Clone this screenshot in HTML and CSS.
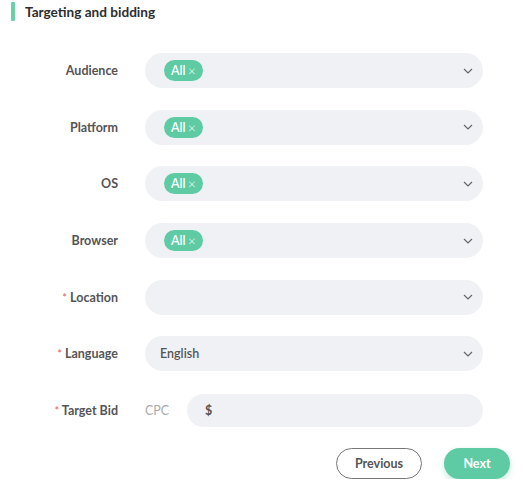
FILE: index.html
```html
<!DOCTYPE html>
<html>
<head>
<meta charset="utf-8">
<link rel="stylesheet" href="styles.css">
</head>
<body>
<div class="page">
  <div class="title"><span class="bar"></span><span>Targeting and bidding</span></div>
  <div class="form">
    <div class="row">
      <div class="label">Audience</div>
      <div class="select"><span class="tag">All <span class="x">×</span></span><svg class="chev" viewBox="0 0 10 6"><path d="M1 1l4 4 4-4" fill="none" stroke="#666" stroke-width="1.2"/></svg></div>
    </div>
    <div class="row">
      <div class="label">Platform</div>
      <div class="select"><span class="tag">All <span class="x">×</span></span><svg class="chev" viewBox="0 0 10 6"><path d="M1 1l4 4 4-4" fill="none" stroke="#666" stroke-width="1.2"/></svg></div>
    </div>
    <div class="row">
      <div class="label">OS</div>
      <div class="select"><span class="tag">All <span class="x">×</span></span><svg class="chev" viewBox="0 0 10 6"><path d="M1 1l4 4 4-4" fill="none" stroke="#666" stroke-width="1.2"/></svg></div>
    </div>
    <div class="row">
      <div class="label">Browser</div>
      <div class="select"><span class="tag">All <span class="x">×</span></span><svg class="chev" viewBox="0 0 10 6"><path d="M1 1l4 4 4-4" fill="none" stroke="#666" stroke-width="1.2"/></svg></div>
    </div>
    <div class="row">
      <div class="label"><span class="req">*</span> Location</div>
      <div class="select"><span class="fill"></span><svg class="chev" viewBox="0 0 10 6"><path d="M1 1l4 4 4-4" fill="none" stroke="#666" stroke-width="1.2"/></svg></div>
    </div>
    <div class="row">
      <div class="label"><span class="req">*</span> Language</div>
      <div class="select"><span class="value">English</span><svg class="chev" viewBox="0 0 10 6"><path d="M1 1l4 4 4-4" fill="none" stroke="#666" stroke-width="1.2"/></svg></div>
    </div>
    <div class="row">
      <div class="label"><span class="req">*</span> Target Bid</div>
      <div class="bid">
        <span class="cpc">CPC</span>
        <div class="input"><span class="dollar">$</span></div>
      </div>
    </div>
  </div>
  <div class="actions">
    <button class="btn prev">Previous</button>
    <button class="btn next">Next</button>
  </div>
</div>
</body>
</html>
```
FILE: styles.css
```css
* { box-sizing: border-box; }
body {
  margin: 0;
  background: #fff;
  font-family: Lato, "Open Sans", sans-serif;
  color: #4a4a4a;
}
.page {
  padding: 2px 13px 0 11px;
}
.title {
  display: flex;
  align-items: center;
  gap: 10px;
  height: 19px;
  font-weight: 700;
  font-size: 13.6px;
  color: #2e2e2e;
}
.bar {
  width: 4px;
  height: 19px;
  background: #68d1aa;
  border-radius: 1px;
}
.form {
  display: flex;
  flex-direction: column;
  gap: 21.7px;
  margin-top: 32px;
}
.row {
  display: flex;
  align-items: center;
  height: 35px;
}
.label {
  width: 107px;
  text-align: right;
  font-size: 12.5px;
  font-weight: 700;
  color: #555;
  margin-right: 27px;
}
.req {
  color: #e55a5a;
  font-weight: 400;
  font-size: 11px;
}
.select {
  flex: 1;
  height: 35px;
  max-width: 338px;
  background: #f0f1f4;
  border-radius: 18px;
  display: flex;
  align-items: center;
  padding: 0 10px 0 19px;
}
.tag {
  background: #5ecba5;
  color: #fff;
  border-radius: 11px;
  height: 21px;
  display: inline-flex;
  align-items: center;
  padding: 0 7px 0 7px;
  font-size: 12.5px;
  font-weight: 600;
}
.x {
  font-weight: 300;
  font-size: 14px;
  margin-left: 2px;
}
.value {
  font-size: 12.5px;
  font-weight: 600;
  color: #555;
  margin-left: -4px;
}
.fill { flex: 1; }
.chev {
  width: 10px;
  height: 6px;
  margin-left: auto;
}
.bid {
  flex: 1;
  max-width: 338px;
  display: flex;
  align-items: center;
}
.cpc {
  font-size: 12.5px;
  color: #aaa;
  width: 42px;
}
.input {
  flex: 1;
  height: 33px;
  background: #f0f1f4;
  border-radius: 17px;
  display: flex;
  align-items: center;
  padding-left: 18px;
}
.dollar {
  font-size: 12.5px;
  font-weight: 700;
  color: #555;
}
.actions {
  display: flex;
  justify-content: flex-end;
  gap: 22px;
  margin-top: 20px;
}
.btn {
  height: 31px;
  border-radius: 16px;
  font-family: Lato, sans-serif;
  font-size: 12.5px;
  font-weight: 700;
  cursor: pointer;
}
.prev {
  width: 86px;
  background: #fff;
  border: 1.5px solid #777;
  color: #555;
}
.next {
  width: 66px;
  background: #5ecba5;
  border: none;
  color: #fff;
  box-shadow: 0 3px 6px rgba(94, 203, 165, 0.35);
}
```
